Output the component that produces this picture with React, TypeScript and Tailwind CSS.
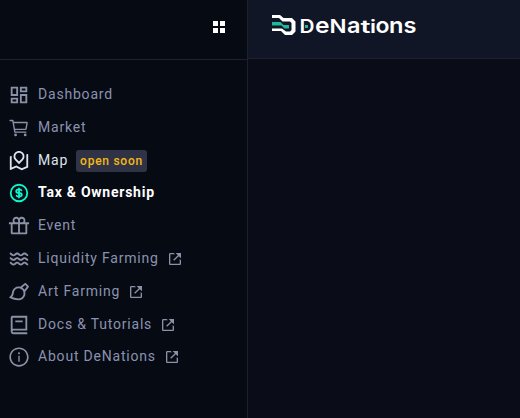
import type { IconType } from 'react-icons';
import { MdOutlineDashboard } from 'react-icons/md';
import { IoCartOutline } from 'react-icons/io5';
import { RiRoadMapLine, RiGiftLine, RiBrushLine, RiBook2Line } from 'react-icons/ri';
import { HiOutlineCurrencyDollar } from 'react-icons/hi';
import { BiWater, BiLinkExternal } from 'react-icons/bi';
import { AiOutlineInfoCircle } from 'react-icons/ai';

type Item = {
  label: string;
  Icon: IconType;
  tone?: string;
  iconTone?: string;
  badge?: string;
  external?: boolean;
};

const items: Item[] = [
  { label: 'Dashboard', Icon: MdOutlineDashboard },
  { label: 'Market', Icon: IoCartOutline },
  { label: 'Map', Icon: RiRoadMapLine, tone: 'text-[#dfe3f0]', iconTone: 'text-[#dfe3f0]', badge: 'open soon' },
  {
    label: 'Tax & Ownership',
    Icon: HiOutlineCurrencyDollar,
    tone: 'text-white font-bold tracking-[0.75px]',
    iconTone: 'text-[#0df5cc]',
  },
  { label: 'Event', Icon: RiGiftLine },
  { label: 'Liquidity Farming', Icon: BiWater, external: true },
  { label: 'Art Farming', Icon: RiBrushLine, external: true },
  { label: 'Docs & Tutorials', Icon: RiBook2Line, external: true },
  { label: 'About DeNations', Icon: AiOutlineInfoCircle, external: true },
];

const letters = [
  { char: 'D', x: 299.5, width: 15, size: 18 },
  { char: 'e', x: 315, width: 14.5, size: 22 },
  { char: 'N', x: 329.5, width: 17, size: 18 },
  { char: 'a', x: 347, width: 13.5, size: 22 },
  { char: 't', x: 360.5, width: 10, size: 18 },
  { char: 'i', x: 370, width: 6, size: 18 },
  { char: 'o', x: 375.5, width: 14, size: 22 },
  { char: 'n', x: 389, width: 14.5, size: 22 },
  { char: 's', x: 403.5, width: 13, size: 22 },
];

function Logo() {
  return (
    <svg width="156" height="44" viewBox="270 5 156 44" className="block">
      <path
        d="M272 15h8l3.500 3H292l3.500 3.500v10L292 35h-7l-4-4h-9v-2.500h10l4 3h4l1.500-1.500v-7L290 21.500h-7.500L279 18h-7z"
        fill="#fff"
      />
      <path d="M272 22h8.500l3 3h5.500v3.500h-4.500l-3-3H272z" fill="#1fb898" />
      {letters.map(({ char, x, width, size }) => (
        <text
          key={char}
          x={x}
          y="32.500"
          fill="#fff"
          fontSize={size}
          fontWeight="600"
          textLength={width}
          lengthAdjust="spacingAndGlyphs"
          className="font-['Inter',sans-serif]"
        >
          {char}
        </text>
      ))}
      <rect x="305" y="25" width="3" height="3" fill="#1fb898" />
    </svg>
  );
}

export default function App() {
  return (
    <div className="flex h-[418px] w-[520px] overflow-hidden bg-[#0a0d18] font-['Roboto',sans-serif]">
      <aside className="flex w-[248px] shrink-0 flex-col border-r border-[#1e212d] bg-[#060a13]">
        <div className="flex h-[60px] items-center justify-end border-b border-[#1e212d] pr-[22px]">
          <div className="-mt-[5px] grid grid-cols-2 gap-[2px]">
            <i className="size-[5px] bg-white" />
            <i className="size-[5px] bg-white" />
            <i className="size-[5px] bg-white" />
            <i className="size-[5px] bg-white" />
          </div>
        </div>
        <nav className="flex flex-col pt-[17.6px] pl-2">
          {items.map(({ label, Icon, tone, iconTone, badge, external }) => (
            <div key={label} className="flex h-[32.8px] items-center">
              <Icon size={22} className={`mt-[2px] shrink-0 ${iconTone ?? 'text-[#8b92a8]'}`} />
              <span
                className={`ml-2 text-sm leading-5 whitespace-nowrap ${tone ?? 'text-[#8b92b0]'} ${tone?.includes('tracking') ? '' : 'tracking-[0.8px]'}`}
              >
                {label}
              </span>
              {badge && (
                <span className="mt-[2px] ml-2 flex h-[22px] items-center rounded-[3px] bg-[#303346] px-1 text-xs font-medium tracking-[0.74px] whitespace-nowrap text-[#f5b914]">
                  {badge}
                </span>
              )}
              {external && <BiLinkExternal size={16} className="mt-[2px] ml-2 shrink-0 text-[#8b92a8]" />}
            </div>
          ))}
        </nav>
      </aside>
      <main className="flex flex-1 flex-col">
        <header className="flex h-[59px] items-start border-b border-[#1e212d] bg-[#111626] pt-[5px] pl-[22px]">
          <Logo />
        </header>
      </main>
    </div>
  );
}
